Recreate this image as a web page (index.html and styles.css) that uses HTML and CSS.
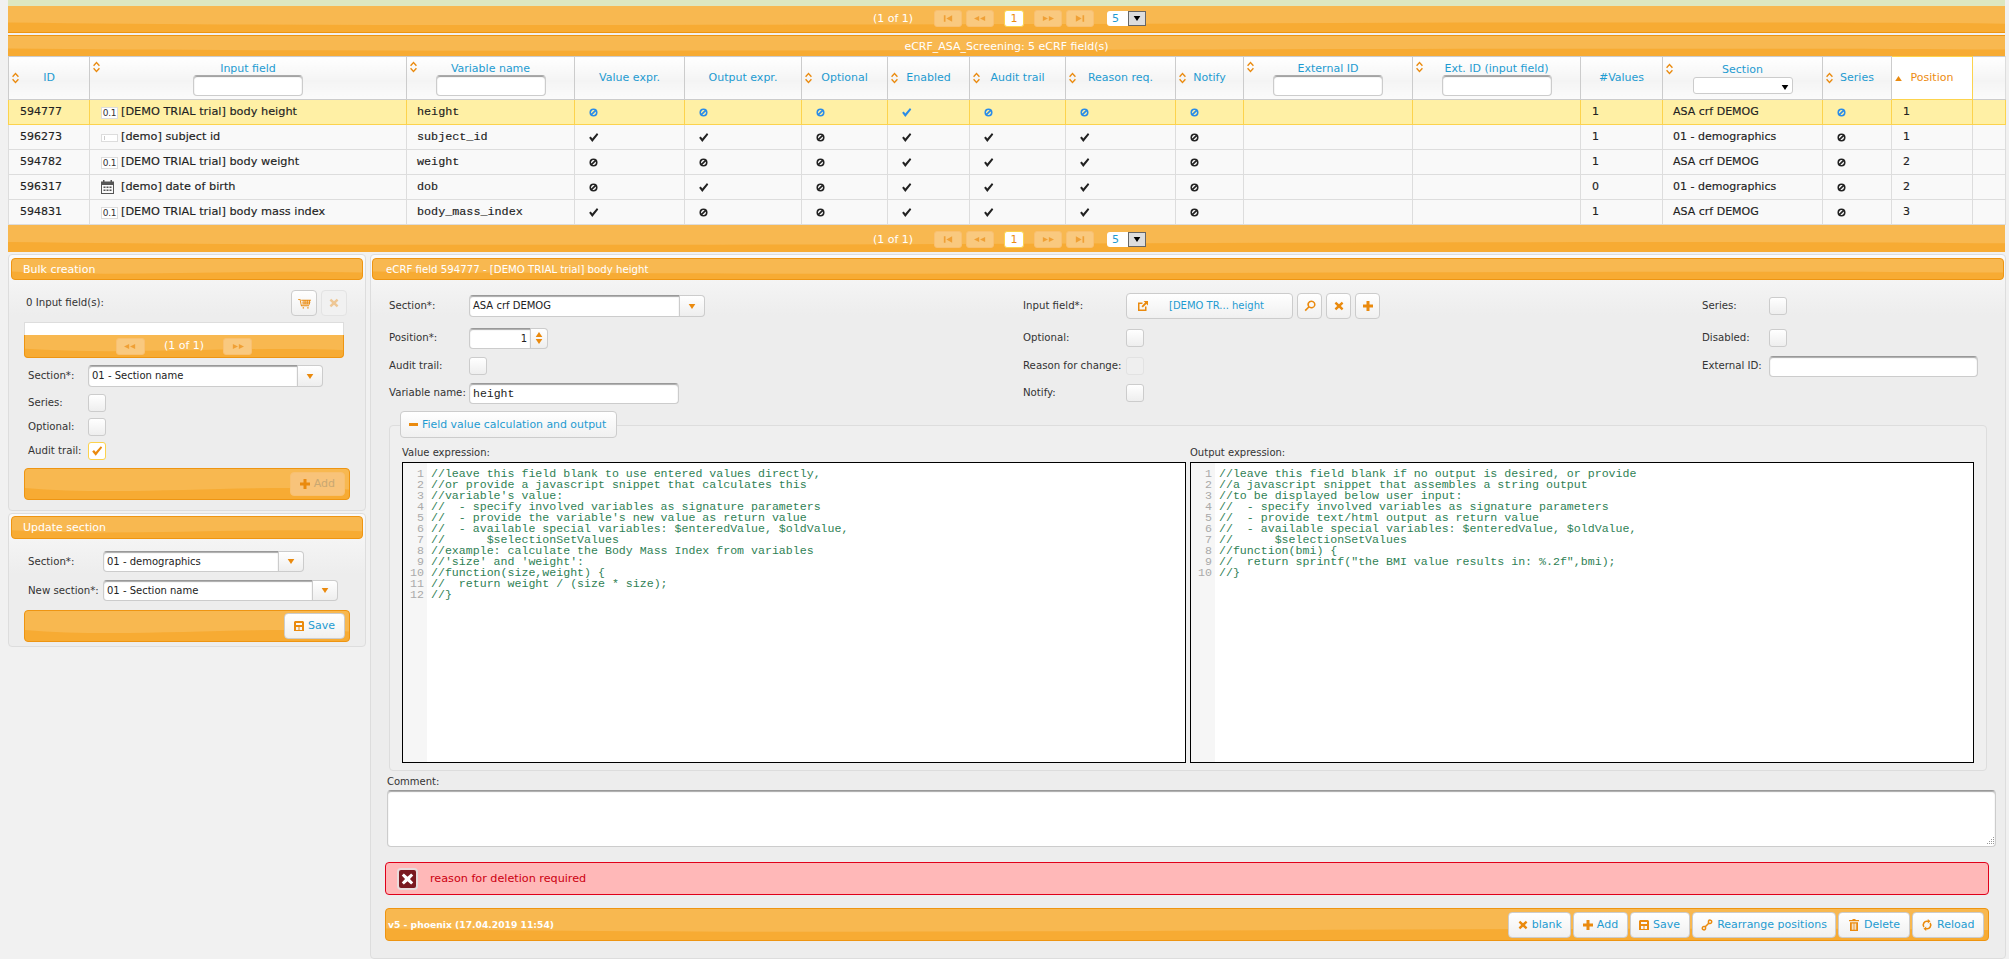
FILE: index.html
```html
<!DOCTYPE html>
<html lang="en">
<head>
<meta charset="utf-8">
<title>eCRF fields</title>
<link rel="stylesheet" href="styles.css">
</head>
<body>
<svg class="defs" width="0" height="0" aria-hidden="true">
  <symbol id="i-check" viewBox="0 0 12 12"><path d="M1.2 6.400 3 4.900 4.700 7 9.800 1.200 11.200 2.600 4.700 10.800Z"/></symbol>
  <symbol id="i-ban" viewBox="0 0 10 10"><path fill-rule="evenodd" d="M5 .5a4.500 4.500 0 1 0 0 9 4.500 4.500 0 0 0 0-9ZM5 2.200c.4 0 .8.1 1.200.3L2.500 6.200A2.800 2.800 0 0 1 5 2.200ZM3.800 7.500 7.500 3.800A2.800 2.800 0 0 1 3.800 7.500Z"/></symbol>
  <symbol id="i-sort" viewBox="0 0 8 14"><path d="M4 .5 8 5 6.800 6 4 2.900 1.200 6 0 5ZM4 13.500 0 9 1.200 8 4 11.100 6.800 8 8 9Z"/></symbol>
  <symbol id="i-up" viewBox="0 0 8 6"><path d="M4 0 8 6H0Z"/></symbol>
  <symbol id="i-down" viewBox="0 0 8 6"><path d="M0 0H8L4 6Z"/></symbol>
  <symbol id="i-x" viewBox="0 0 10 10"><path d="M2.200.8 5 3.300 7.800.8 9.400 2.400 6.900 5 9.400 7.600 7.800 9.200 5 6.700 2.200 9.200.6 7.600 3.100 5 .6 2.400Z"/></symbol>
  <symbol id="i-plus" viewBox="0 0 10 10"><path d="M3.500 0H6.500V3.500H10V6.500H6.500V10H3.500V6.500H0V3.500H3.500Z"/></symbol>
  <symbol id="i-save" viewBox="0 0 10 10"><path fill-rule="evenodd" d="M1 0H9L10 1V10H0V1ZM2 2V4H8V2ZM2 6V9H4.500V6ZM5.500 6V9H8V6Z"/></symbol>
  <symbol id="i-search" viewBox="0 0 12 12"><path fill-rule="evenodd" d="M7.500.5a4 4 0 1 1-2.400 7.200L1.800 11.200.6 10 4 6.700A4 4 0 0 1 7.500.5ZM7.500 2a2.500 2.500 0 1 0 0 5 2.500 2.500 0 0 0 0-5Z"/></symbol>
  <symbol id="i-link" viewBox="0 0 12 12"><path d="M1 2.500H5.500V4H2.500V9.500H8V6.500H9.500V11H1ZM6.500 1H11V5.500L9.400 3.900 5.800 7.500 4.500 6.200 8.100 2.600Z"/></symbol>
  <symbol id="i-chain" viewBox="0 0 12 12"><path fill="none" stroke="currentColor" stroke-width="1.500" d="M2.800 7.500a1.700 1.700 0 1 0 1.700 2.400V7.500H2.800ZM4.500 7.500 7.500 4.500M9.200 4.500a1.700 1.700 0 1 0-1.700-2.400V4.500H9.200Z"/></symbol>
  <symbol id="i-trash" viewBox="0 0 10 12"><path fill-rule="evenodd" d="M3.500 0H6.500V1H10V2.300H0V1H3.500ZM1 3.200H9V12H1ZM2.800 4.500V10.700H3.800V4.500ZM4.500 4.500V10.700H5.500V4.500ZM6.200 4.500V10.700H7.200V4.500Z"/></symbol>
  <symbol id="i-reload" viewBox="0 0 12 12"><path d="M6.800 0 9.500 2.300 6.800 4.600V3A3 3 0 0 0 3.500 7.500L2.300 8.500A4.400 4.400 0 0 1 6.800 1.600ZM5.200 12 2.500 9.700 5.200 7.400V9A3 3 0 0 0 8.500 4.500L9.700 3.500A4.400 4.400 0 0 1 5.200 10.400Z"/></symbol>
  <symbol id="i-cart" viewBox="0 0 14 12"><path d="M0 1H2.500L4 8H12V9H3.200L1.700 2H0ZM3.500 2H14V3H3.500ZM4 4H13.500V5H4ZM4.500 6H13V7H4.500ZM5 10H6.500V11.500H5ZM10 10H11.500V11.500H10ZM6 2H7V7H6ZM8 2H9V7H8ZM10 2H11V7H10ZM12 2H13V7H12Z"/></symbol>
  <symbol id="i-cal" viewBox="0 0 13 14"><path fill-rule="evenodd" d="M2 0H3.500V1.500H9.500V0H11V1.500H13V14H0V1.500H2ZM1 5V13H12V5ZM2.500 6.500H4.500V8H2.500ZM5.500 6.500H7.500V8H5.500ZM8.500 6.500H10.500V8H8.500ZM2.500 9.500H4.500V11H2.500ZM5.500 9.500H7.500V11H5.500ZM8.500 9.500H10.500V11H8.500Z"/></symbol>
  <symbol id="i-first" viewBox="0 0 12 8"><path d="M1 0H3V8H1ZM4 4 11 0V8Z"/></symbol>
  <symbol id="i-prev" viewBox="0 0 14 8"><path d="M0 4 6 1V7ZM7 4 13 1V7Z"/></symbol>
  <symbol id="i-next" viewBox="0 0 14 8"><path d="M7 4 1 1V7ZM14 4 8 1V7Z"/></symbol>
  <symbol id="i-last" viewBox="0 0 12 8"><path d="M11 0H9V8H11ZM8 4 1 0V8Z"/></symbol>
</svg>

<div class="strip"></div>

<div class="wave pager">
  <span class="pager-text">(1 of 1)</span>
  <span class="pg pg-first"><svg class="ico pg-i12"><use href="#i-first"/></svg></span>
  <span class="pg pg-prev"><svg class="ico pg-i14"><use href="#i-prev"/></svg></span>
  <span class="pg-num">1</span>
  <span class="pg pg-next"><svg class="ico pg-i14"><use href="#i-next"/></svg></span>
  <span class="pg pg-last"><svg class="ico pg-i12"><use href="#i-last"/></svg></span>
  <span class="pg-select"><span class="pg-select-val">5</span><span class="pg-select-btn"><svg class="ico tri-black"><use href="#i-down"/></svg></span></span>
</div>

<div class="wave title-bar">eCRF_ASA_Screening: 5 eCRF field(s)</div>

<table class="grid">
  <colgroup>
    <col class="c81"><col class="c317"><col class="c168"><col class="c110"><col class="c117"><col class="c86"><col class="c82"><col class="c96"><col class="c110"><col class="c68"><col class="c169"><col class="c168b"><col class="c82"><col class="c160"><col class="c69"><col class="c81"><col class="c33">
  </colgroup>
  <thead>
    <tr>
      <th><div class="hc"><svg class="ico sort"><use href="#i-sort"/></svg><span class="hl">ID</span></div></th>
      <th><div class="hc hc-top"><svg class="ico sort"><use href="#i-sort"/></svg><div class="hstack"><span class="hl">Input field</span><span class="filter"></span></div></div></th>
      <th><div class="hc hc-top"><svg class="ico sort"><use href="#i-sort"/></svg><div class="hstack"><span class="hl">Variable name</span><span class="filter"></span></div></div></th>
      <th><div class="hc"><span class="hl hl-nosort">Value expr.</span></div></th>
      <th><div class="hc"><span class="hl hl-nosort">Output expr.</span></div></th>
      <th><div class="hc"><svg class="ico sort"><use href="#i-sort"/></svg><span class="hl">Optional</span></div></th>
      <th><div class="hc"><svg class="ico sort"><use href="#i-sort"/></svg><span class="hl">Enabled</span></div></th>
      <th><div class="hc"><svg class="ico sort"><use href="#i-sort"/></svg><span class="hl">Audit trail</span></div></th>
      <th><div class="hc"><svg class="ico sort"><use href="#i-sort"/></svg><span class="hl">Reason req.</span></div></th>
      <th><div class="hc"><svg class="ico sort"><use href="#i-sort"/></svg><span class="hl">Notify</span></div></th>
      <th><div class="hc hc-top"><svg class="ico sort"><use href="#i-sort"/></svg><div class="hstack"><span class="hl">External ID</span><span class="filter"></span></div></div></th>
      <th><div class="hc hc-top"><svg class="ico sort"><use href="#i-sort"/></svg><div class="hstack"><span class="hl">Ext. ID (input field)</span><span class="filter"></span></div></div></th>
      <th><div class="hc"><span class="hl hl-nosort">#Values</span></div></th>
      <th><div class="hc hc-top hc-sect"><svg class="ico sort"><use href="#i-sort"/></svg><div class="hstack hstack-sect"><span class="hl">Section</span><span class="hselect"><svg class="ico tri-black"><use href="#i-down"/></svg></span></div></div></th>
      <th><div class="hc"><svg class="ico sort"><use href="#i-sort"/></svg><span class="hl">Series</span></div></th>
      <th class="th-active"><div class="hc"><svg class="ico sort-up"><use href="#i-up"/></svg><span class="hl hl-active">Position</span></div></th>
      <th></th>
    </tr>
  </thead>
  <tbody>
    <tr class="sel">
      <td>594777</td>
      <td><span class="ti"><span class="num-ico">0.1</span>[DEMO TRIAL trial] body height</span></td>
      <td class="mono">height</td>
      <td><svg class="ico flag ban"><use href="#i-ban"/></svg></td>
      <td><svg class="ico flag ban"><use href="#i-ban"/></svg></td>
      <td><svg class="ico flag ban"><use href="#i-ban"/></svg></td>
      <td><svg class="ico flag chk"><use href="#i-check"/></svg></td>
      <td><svg class="ico flag ban"><use href="#i-ban"/></svg></td>
      <td><svg class="ico flag ban"><use href="#i-ban"/></svg></td>
      <td><svg class="ico flag ban"><use href="#i-ban"/></svg></td>
      <td></td><td></td><td>1</td><td class="sect">ASA crf DEMOG</td>
      <td><svg class="ico flag ban"><use href="#i-ban"/></svg></td>
      <td>1</td><td></td>
    </tr>
    <tr>
      <td>596273</td>
      <td><span class="ti"><span class="txt-ico"><i></i></span>[demo] subject id</span></td>
      <td class="mono">subject_id</td>
      <td><svg class="ico flag chk"><use href="#i-check"/></svg></td>
      <td><svg class="ico flag chk"><use href="#i-check"/></svg></td>
      <td><svg class="ico flag ban"><use href="#i-ban"/></svg></td>
      <td><svg class="ico flag chk"><use href="#i-check"/></svg></td>
      <td><svg class="ico flag chk"><use href="#i-check"/></svg></td>
      <td><svg class="ico flag chk"><use href="#i-check"/></svg></td>
      <td><svg class="ico flag ban"><use href="#i-ban"/></svg></td>
      <td></td><td></td><td>1</td><td class="sect">01 - demographics</td>
      <td><svg class="ico flag ban"><use href="#i-ban"/></svg></td>
      <td>1</td><td></td>
    </tr>
    <tr>
      <td>594782</td>
      <td><span class="ti"><span class="num-ico">0.1</span>[DEMO TRIAL trial] body weight</span></td>
      <td class="mono">weight</td>
      <td><svg class="ico flag ban"><use href="#i-ban"/></svg></td>
      <td><svg class="ico flag ban"><use href="#i-ban"/></svg></td>
      <td><svg class="ico flag ban"><use href="#i-ban"/></svg></td>
      <td><svg class="ico flag chk"><use href="#i-check"/></svg></td>
      <td><svg class="ico flag chk"><use href="#i-check"/></svg></td>
      <td><svg class="ico flag chk"><use href="#i-check"/></svg></td>
      <td><svg class="ico flag ban"><use href="#i-ban"/></svg></td>
      <td></td><td></td><td>1</td><td class="sect">ASA crf DEMOG</td>
      <td><svg class="ico flag ban"><use href="#i-ban"/></svg></td>
      <td>2</td><td></td>
    </tr>
    <tr>
      <td>596317</td>
      <td><span class="ti"><svg class="ico cal"><use href="#i-cal"/></svg>[demo] date of birth</span></td>
      <td class="mono">dob</td>
      <td><svg class="ico flag ban"><use href="#i-ban"/></svg></td>
      <td><svg class="ico flag chk"><use href="#i-check"/></svg></td>
      <td><svg class="ico flag ban"><use href="#i-ban"/></svg></td>
      <td><svg class="ico flag chk"><use href="#i-check"/></svg></td>
      <td><svg class="ico flag chk"><use href="#i-check"/></svg></td>
      <td><svg class="ico flag chk"><use href="#i-check"/></svg></td>
      <td><svg class="ico flag ban"><use href="#i-ban"/></svg></td>
      <td></td><td></td><td>0</td><td class="sect">01 - demographics</td>
      <td><svg class="ico flag ban"><use href="#i-ban"/></svg></td>
      <td>2</td><td></td>
    </tr>
    <tr>
      <td>594831</td>
      <td><span class="ti"><span class="num-ico">0.1</span>[DEMO TRIAL trial] body mass index</span></td>
      <td class="mono">body_mass_index</td>
      <td><svg class="ico flag chk"><use href="#i-check"/></svg></td>
      <td><svg class="ico flag ban"><use href="#i-ban"/></svg></td>
      <td><svg class="ico flag ban"><use href="#i-ban"/></svg></td>
      <td><svg class="ico flag chk"><use href="#i-check"/></svg></td>
      <td><svg class="ico flag chk"><use href="#i-check"/></svg></td>
      <td><svg class="ico flag chk"><use href="#i-check"/></svg></td>
      <td><svg class="ico flag ban"><use href="#i-ban"/></svg></td>
      <td></td><td></td><td>1</td><td class="sect">ASA crf DEMOG</td>
      <td><svg class="ico flag ban"><use href="#i-ban"/></svg></td>
      <td>3</td><td></td>
    </tr>
  </tbody>
</table>

<div class="wave pager pager-bottom">
  <span class="pager-text">(1 of 1)</span>
  <span class="pg pg-first"><svg class="ico pg-i12"><use href="#i-first"/></svg></span>
  <span class="pg pg-prev"><svg class="ico pg-i14"><use href="#i-prev"/></svg></span>
  <span class="pg-num">1</span>
  <span class="pg pg-next"><svg class="ico pg-i14"><use href="#i-next"/></svg></span>
  <span class="pg pg-last"><svg class="ico pg-i12"><use href="#i-last"/></svg></span>
  <span class="pg-select"><span class="pg-select-val">5</span><span class="pg-select-btn"><svg class="ico tri-black"><use href="#i-down"/></svg></span></span>
</div>

<div class="columns">
  <aside class="side">
    <section class="panel panel-bulk">
      <h2 class="wave panel-head">Bulk creation</h2>
      <div class="panel-body">
        <div class="tools">
          <span class="lbl tools-label">0 Input field(s):</span>
          <span class="btn icon-btn"><svg class="ico i-or cart"><use href="#i-cart"/></svg></span>
          <span class="btn icon-btn btn-off"><svg class="ico i-or i10"><use href="#i-x"/></svg></span>
        </div>
        <div class="mini-list"></div>
        <div class="wave mini-pager">
          <span class="pg pg-mini"><svg class="ico pg-i14"><use href="#i-prev"/></svg></span>
          <span class="pager-text">(1 of 1)</span>
          <span class="pg pg-mini"><svg class="ico pg-i14"><use href="#i-next"/></svg></span>
        </div>
        <div class="row row-section">
          <span class="lbl lbl-60">Section*:</span>
          <span class="combo combo-210"><span class="input combo-in">01 - Section name</span><span class="combo-btn"><svg class="ico tri-or"><use href="#i-down"/></svg></span></span>
        </div>
        <div class="row row-check"><span class="lbl lbl-60">Series:</span><span class="cb"></span></div>
        <div class="row row-check"><span class="lbl lbl-60">Optional:</span><span class="cb"></span></div>
        <div class="row row-check"><span class="lbl lbl-60">Audit trail:</span><span class="cb cb-on"><svg class="ico i-or i12"><use href="#i-check"/></svg></span></div>
        <div class="wave bar side-bar">
          <span class="btn text-btn btn-disabled"><svg class="ico i-or i10"><use href="#i-plus"/></svg>Add</span>
        </div>
      </div>
    </section>

    <section class="panel panel-update">
      <h2 class="wave panel-head panel-head-update">Update section</h2>
      <div class="panel-body">
        <div class="row row-u1">
          <span class="lbl lbl-75">Section*:</span>
          <span class="combo combo-178"><span class="input combo-in">01 - demographics</span><span class="combo-btn"><svg class="ico tri-or"><use href="#i-down"/></svg></span></span>
        </div>
        <div class="row row-u2">
          <span class="lbl lbl-75">New section*:</span>
          <span class="combo combo-209"><span class="input combo-in">01 - Section name</span><span class="combo-btn"><svg class="ico tri-or"><use href="#i-down"/></svg></span></span>
        </div>
        <div class="wave bar side-bar update-bar">
          <span class="btn text-btn"><svg class="ico i-or i10"><use href="#i-save"/></svg>Save</span>
        </div>
      </div>
    </section>
  </aside>

  <main class="panel panel-main">
    <h2 class="wave panel-head panel-head-main">eCRF field 594777 - [DEMO TRIAL trial] body height</h2>

    <div class="form">
      <span class="lbl">Section*:</span>
      <span class="combo combo-210b"><span class="input combo-in">ASA crf DEMOG</span><span class="combo-btn"><svg class="ico tri-or"><use href="#i-down"/></svg></span></span>
      <span class="lbl">Input field*:</span>
      <span class="ctl-group">
        <span class="btn field-btn"><svg class="ico i-or i12"><use href="#i-link"/></svg><span class="field-text">[DEMO TR... height</span></span>
        <span class="btn small-btn"><svg class="ico i-or i12"><use href="#i-search"/></svg></span>
        <span class="btn small-btn"><svg class="ico i-or i10"><use href="#i-x"/></svg></span>
        <span class="btn small-btn"><svg class="ico i-or i10"><use href="#i-plus"/></svg></span>
      </span>
      <span class="lbl">Series:</span>
      <span class="cb"></span>

      <span class="lbl">Position*:</span>
      <span class="spinner"><span class="input spin-in">1</span><span class="spin-btns"><svg class="ico tri-or"><use href="#i-up"/></svg><svg class="ico tri-or"><use href="#i-down"/></svg></span></span>
      <span class="lbl">Optional:</span>
      <span class="cb"></span>
      <span class="lbl">Disabled:</span>
      <span class="cb"></span>

      <span class="lbl">Audit trail:</span>
      <span class="cb"></span>
      <span class="lbl">Reason for change:</span>
      <span class="cb cb-off"></span>
      <span class="lbl">External ID:</span>
      <span class="input ext-id"></span>

      <span class="lbl">Variable name:</span>
      <span class="input var-name">height</span>
      <span class="lbl">Notify:</span>
      <span class="cb"></span>
    </div>

    <div class="calc">
      <div class="legend"><span class="minus"></span>Field value calculation and output</div>
      <div class="calc-box">
        <div class="editors">
          <div class="ed-col">
            <div class="lbl ed-label">Value expression:</div>
            <div class="editor">
              <pre class="gutter">1
2
3
4
5
6
7
8
9
10
11
12</pre>
              <pre class="code">//leave this field blank to use entered values directly,
//or provide a javascript snippet that calculates this
//variable's value:
//  - specify involved variables as signature parameters
//  - provide the variable's new value as return value
//  - available special variables: $enteredValue, $oldValue,
//      $selectionSetValues
//example: calculate the Body Mass Index from variables
//'size' and 'weight':
//function(size,weight) {
//  return weight / (size * size);
//}</pre>
            </div>
          </div>
          <div class="ed-col">
            <div class="lbl ed-label">Output expression:</div>
            <div class="editor">
              <pre class="gutter">1
2
3
4
5
6
7
8
9
10</pre>
              <pre class="code">//leave this field blank if no output is desired, or provide
//a javascript snippet that assembles a string output
//to be displayed below user input:
//  - specify involved variables as signature parameters
//  - provide text/html output as return value
//  - available special variables: $enteredValue, $oldValue,
//      $selectionSetValues
//function(bmi) {
//  return sprintf("the BMI value results in: %.2f",bmi);
//}</pre>
            </div>
          </div>
        </div>
      </div>
    </div>

    <div class="lbl comment-label">Comment:</div>
    <div class="input comment"><svg class="grip" viewBox="0 0 8 8"><path d="M7 0h1v1H7ZM5 2h1v1H5ZM7 2h1v1H7ZM3 4h1v1H3ZM5 4h1v1H5ZM7 4h1v1H7ZM1 6h1v1H1ZM3 6h1v1H3ZM5 6h1v1H5ZM7 6h1v1H7Z"/></svg></div>

    <div class="error">
      <span class="err-ico"><svg class="ico err-x"><use href="#i-x"/></svg></span>
      <span>reason for deletion required</span>
    </div>

    <div class="wave bar main-bar">
      <span class="version">v5 - phoenix (17.04.2019 11:54)</span>
      <span class="bar-btns">
        <span class="btn text-btn"><svg class="ico i-or i10"><use href="#i-x"/></svg>blank</span>
        <span class="btn text-btn"><svg class="ico i-or i10"><use href="#i-plus"/></svg>Add</span>
        <span class="btn text-btn"><svg class="ico i-or i10"><use href="#i-save"/></svg>Save</span>
        <span class="btn text-btn"><svg class="ico i-or i12"><use href="#i-chain"/></svg>Rearrange positions</span>
        <span class="btn text-btn"><svg class="ico i-or i12"><use href="#i-trash"/></svg>Delete</span>
        <span class="btn text-btn"><svg class="ico i-or i12"><use href="#i-reload"/></svg>Reload</span>
      </span>
    </div>
  </main>
</div>
</body>
</html>
```
FILE: styles.css
```css
* { box-sizing: border-box; }
html, body { margin: 0; height: 959px; overflow: hidden; }
body {
  width: 2009px;
  padding: 0 4px 0 8px;
  background: #f1f1f1;
  font: 11px/14px "DejaVu Sans", Verdana, sans-serif;
  color: #333;
}
.defs { position: absolute; }
.ico { display: block; fill: currentColor; flex: none; }

.strip { height: 6px; background: #dde7c1; }

.wave {
  background: #f7ab33 url("data:image/svg+xml,%3Csvg xmlns='http://www.w3.org/2000/svg' viewBox='0 0 100 10' preserveAspectRatio='none'%3E%3Cpath d='M0 0H100V6.800C70 5 30 9.200 0 6.300Z' fill='%23f8b850'/%3E%3C/svg%3E") 0 0 / 100% 100% no-repeat;
  color: #fff;
}

/* pager */
.pager {
  display: flex; align-items: center; justify-content: center;
  height: 27px; padding: 0 0 1px 6px;
  border-bottom: 1px solid #ee9512;
}
.pager-bottom { height: 27px; padding-top: 2px; padding-bottom: 0; border-bottom: 0; }
.pager-text { color: #fff; font-size: 11px; }
.pg {
  display: flex; align-items: center; justify-content: center;
  width: 28px; height: 17px; border-radius: 3px;
  background: #f9c97f; border: 1px solid #f9c070; color: #f0a035;
}
.pg-first { margin-left: 21px; }
.pg-prev { margin-left: 4px; }
.pg-next { margin-left: 10px; }
.pg-last { margin-left: 4px; }
.pg-i12 { width: 10px; height: 7px; }
.pg-i14 { width: 12px; height: 7px; }
.pg-num {
  width: 20px; height: 17px; margin-left: 10px; border-radius: 3px;
  background: #fff; border: 1px solid #fcd34d; color: #ec8c12;
  text-align: center; line-height: 15px;
}
.pg-select { display: flex; width: 39px; height: 15px; margin-left: 13px; }
.pg-select-val { flex: 1; background: #fff; border-radius: 3px 0 0 3px; color: #1e9bd1; padding-left: 5px; line-height: 15px; }
.pg-select-btn { display: flex; align-items: center; justify-content: center; width: 18px; background: #ddd; border: 1px solid #666; }
.tri-black { width: 8px; height: 5px; color: #000; }

.title-bar {
  margin-top: 2px; height: 21px; text-align: center; line-height: 22px;
  border-top: 1px solid #ee9512; font-size: 11px;
}

/* grid */
.grid { width: 1997px; border-collapse: collapse; table-layout: fixed; }
.c81 { width: 81px; } .c317 { width: 317px; } .c168, .c168b { width: 168px; } .c110 { width: 110px; }
.c117 { width: 117px; } .c86 { width: 86px; } .c82 { width: 82px; } .c96 { width: 96px; }
.c68 { width: 68px; } .c169 { width: 169px; } .c160 { width: 160px; } .c69 { width: 69px; } .c33 { width: 33px; }
.grid th {
  height: 43px; padding: 0 3px; font-weight: normal;
  border: 1px solid #ccc;
  background: linear-gradient(#fff, #f4f4f4 55%, #fbfbfb);
}
.grid th:last-child { border-right: 1px solid #ddd; }
.th-active.th-active { background: #fff; border: 1px solid #fcd34d; }
.hc { display: grid; grid-template-columns: 10px 1fr 10px; align-items: center; }
.hc-top { align-items: start; }
.hl { color: #1e9bd1; font-size: 11px; line-height: 14px; white-space: nowrap; }
.hl-nosort { grid-column: 1 / -1; }
.hl-active { color: #ec8c12; }
.hstack { display: flex; flex-direction: column; align-items: center; margin-top: -1px; }
.hstack .hl { margin-top: 2px; }
.hstack-sect { margin-top: 0; }
.hstack-sect .hl { margin-top: 0; }
.sort { width: 7px; height: 12px; color: #ea8a0e; }
.sort-up { width: 7px; height: 5px; color: #ea8a0e; }
.filter {
  display: block; width: 110px; height: 21px; margin-top: -1px;
  background: #fff; border: 1px solid #ccc; border-top-color: #aaa; border-radius: 4px;
  box-shadow: inset 0 1px 1px #999;
}
.hselect {
  display: flex; align-items: flex-end; justify-content: flex-end;
  width: 100px; height: 17px; padding: 0 3px 3px 0;
  background: #fff; border: 1px solid #ccc; border-radius: 3px;
}
.grid td {
  height: 25px; padding: 0 0 0 11px;
  background: #f9f9f9; border: 1px solid #ddd;
  white-space: nowrap; font-size: 11px; color: #222;
  -webkit-text-stroke: .15px #222;
}
.grid tr.sel td { background: #fff0a5; border-color: #fcd34d; }
.grid td.sect { padding-left: 10px; }
.grid td.mono { padding-left: 10px; font: 11.75px "Liberation Mono", "Courier New", monospace; }
.flag { width: 11px; height: 11px; margin-left: 2px; color: #222; }
.ban { width: 9px; height: 9px; margin-left: 3px; }
.sel .flag { color: #2a8ce8; }
.ti { display: flex; align-items: center; font-size: 11.3px; }
.num-ico {
  display: block; width: 17px; height: 12px; margin-right: 3px; margin-top: 1px;
  background: #fff; border: 1px solid #ddd; color: #333;
  font-size: 9px; line-height: 11px; text-align: center; letter-spacing: -.3px;
  -webkit-text-stroke: 0;
}
.txt-ico {
  display: block; width: 17px; height: 8px; margin-right: 3px; margin-top: 2px;
  background: #fff; border: 1px solid #ddd; padding: 1px 0 0 2px;
}
.txt-ico i { display: block; width: 1px; height: 4px; background: #ccc; }
.cal { width: 13px; height: 14px; margin-right: 7px; color: #555; }

/* columns */
.columns { display: flex; gap: 4px; margin-top: 2px; align-items: flex-start; }
.side { width: 358px; flex: none; }
.panel {
  border: 1px solid #ddd; border-radius: 4px;
  background: linear-gradient(#fafafa, #ededed 60px);
}
.panel-head {
  margin: 3px 2px 0; height: 22px; padding-left: 11px;
  border: 1px solid #ee9512; border-radius: 4px;
  font: normal 11px/22px "DejaVu Sans", sans-serif;
}
.panel-body { padding: 0 15px; }
.panel-bulk { height: 257px; }
.panel-update { height: 134px; margin-top: 2px; }
.panel-head-update { margin-top: 2px; height: 23px; }

.lbl { color: #333; font-size: 10.2px; white-space: nowrap; }
.tools { display: flex; align-items: center; gap: 4px; margin-top: 10px; padding: 0 3px 0 2px; }
.tools-label { flex: 1; }
.btn {
  display: inline-flex; align-items: center; justify-content: center;
  background: linear-gradient(#fff, #f0f0f0); border: 1px solid #ccc; border-radius: 4px;
  color: #1e9bd1; font-size: 11px; white-space: nowrap;
}
.icon-btn { width: 26px; height: 26px; }
.btn-off { background: #f1f1f1; border-color: #e3e3e3; }
.btn-off .ico { opacity: .4; }
.i-or { color: #ea8a0e; }
.i10 { width: 10px; height: 10px; }
.i12 { width: 12px; height: 12px; }
.cart { width: 13px; height: 11px; }

.mini-list { width: 320px; height: 13px; margin-top: 6px; background: #fff; border: 1px solid #ddd; border-bottom: 0; }
.mini-pager {
  display: flex; align-items: center; justify-content: center; gap: 19px;
  width: 320px; height: 23px;
  border: 1px solid #ee9512; border-top: 0; border-radius: 0 0 4px 4px;
}
.pg-mini { width: 29px; height: 17px; }

.row { display: flex; align-items: center; padding-left: 4px; }
.row-section { margin-top: 7px; height: 22px; }
.row-check { margin-top: 6px; height: 18px; }
.row-section + .row-check { margin-top: 7px; }
.row-u1 { margin-top: 12px; height: 21px; }
.row-u2 { margin-top: 8px; height: 21px; }
.lbl-60 { width: 60px; flex: none; }
.lbl-75 { width: 75px; flex: none; }

.input {
  display: block; background: #fff;
  border: 1px solid #ccc; border-top-color: #999; border-radius: 4px;
  box-shadow: inset 0 1px 1px #aaa;
  font-size: 10px; line-height: 19px; padding: 0 3px; color: #222;
}
.combo { display: flex; flex: none; height: 22px; }
.combo-in { flex: 1; border-radius: 4px 0 0 4px; line-height: 20px; }
.combo-btn {
  display: flex; align-items: center; justify-content: center; flex: none; width: 25px;
  background: linear-gradient(#fff, #eee); border: 1px solid #ccc; border-left: 0; border-radius: 0 4px 4px 0;
}
.tri-or { width: 8px; height: 5px; color: #ea8a0e; }
.combo-210 { width: 235px; }
.combo-178 { width: 201px; height: 21px; }
.combo-209 { width: 235px; height: 21px; }
.combo-210b { width: 236px; }

.cb {
  display: flex; align-items: center; justify-content: center; flex: none;
  width: 18px; height: 18px;
  background: linear-gradient(#fff, #eee); border: 1px solid #ccc; border-radius: 3px;
}
.cb-on { background: #fff; border-color: #fcd34d; }
.cb-off { background: #efefef; border-color: #e2e2e2; }

.bar { display: flex; align-items: center; border: 1px solid #ee9512; border-radius: 4px; }
.side-bar { width: 326px; height: 32px; margin-top: 8px; justify-content: flex-end; padding-right: 4px; }
.update-bar { margin-top: 9px; }
.text-btn { gap: 4px; height: 26px; padding: 0 8.5px; }
.side-bar .text-btn { padding: 0 9px; }
.btn-disabled.btn-disabled { background: #f8c37a; border-color: #f8c070; color: #c9a872; height: 24px; }

/* main panel */
.panel-main { flex: 1; height: 705px; }
.panel-head-main { margin: 3px 1px 0; padding-left: 13px; font-size: 10.2px; }
.form {
  display: grid;
  grid-template-columns: 80px 554px 103px 576px 67px 1fr;
  grid-template-rows: 26px 38px 18px 36px;
  align-items: center;
  margin: 13px 0 0 18px;
}
.ctl-group { display: flex; gap: 4px; }
.field-btn { width: 167px; height: 26px; justify-content: flex-start; padding-left: 10px; font-size: 10px; }
.field-text { margin-left: 20px; }
.small-btn { width: 25px; height: 26px; }
.spinner { display: flex; width: 79px; height: 21px; }
.spin-in { width: 62px; text-align: right; border-radius: 4px 0 0 4px; padding-right: 3px; }
.spin-btns {
  display: flex; flex-direction: column; align-items: center; justify-content: space-around;
  width: 17px; padding: 2px 0;
  background: linear-gradient(#fff, #eee); border: 1px solid #ccc; border-left: 0; border-radius: 0 4px 4px 0;
}
.ext-id { width: 209px; height: 21px; }
.var-name { width: 210px; height: 21px; font: 11.5px/19px "Liberation Mono", monospace; }

.calc { margin-left: 18px; margin-right: 18px; }
.legend {
  display: flex; align-items: center; gap: 4px; position: relative; z-index: 1;
  width: 217px; height: 27px; margin: 0 0 -13px 11px; padding-left: 8px;
  background: linear-gradient(#fff, #f0f0f0); border: 1px solid #ccc; border-radius: 4px;
  color: #1e9bd1; font-size: 10.9px;
}
.minus { width: 9px; height: 3px; background: #ea8a0e; }
.calc-box {
  height: 346px; padding: 20px 12px 0;
  background: #efefef; border: 1px solid #ddd; border-radius: 4px;
}
.editors { display: grid; grid-template-columns: 784px 784px; gap: 4px; }
.ed-label { height: 16px; line-height: 14px; font-size: 10px; }
.editor { display: flex; height: 301px; background: #fff; border: 1px solid #000; }
.gutter, .code { margin: 0; padding-top: 5px; font: 11.6px/11px "Liberation Mono", "Courier New", monospace; }
.gutter { width: 24px; flex: none; padding-right: 3px; text-align: right; color: #aaa; background: #f6f6f6; }
.code { padding-left: 4px; color: #2f7f55; }

.comment-label { display: block; margin: 4px 0 0 16px; height: 15px; font-size: 10px; }
.comment { position: relative; width: 1609px; height: 57px; margin-left: 16px; }
.grip { position: absolute; right: 1px; bottom: 1px; width: 8px; height: 8px; fill: #999; }

.error {
  display: flex; align-items: center; gap: 12px;
  width: 1604px; height: 33px; margin: 15px 0 0 14px; padding-left: 11px;
  background: #ffb8b8; border: 1px solid #e0001a; border-radius: 4px;
  color: #cc0011; font-size: 11.2px;
}
.err-ico {
  display: flex; align-items: center; justify-content: center;
  width: 21px; height: 22px;
  background: #7a1a20; border: 2px solid #e8dcdc; border-radius: 4px;
}
.err-x { width: 13px; height: 14px; color: #fff; }

.main-bar { width: 1604px; height: 33px; margin: 13px 0 0 14px; padding: 0 4px 0 2px; justify-content: space-between; }
.version { color: #fff; font-size: 9.2px; font-weight: bold; }
.bar-btns { display: flex; gap: 2px; }
```
